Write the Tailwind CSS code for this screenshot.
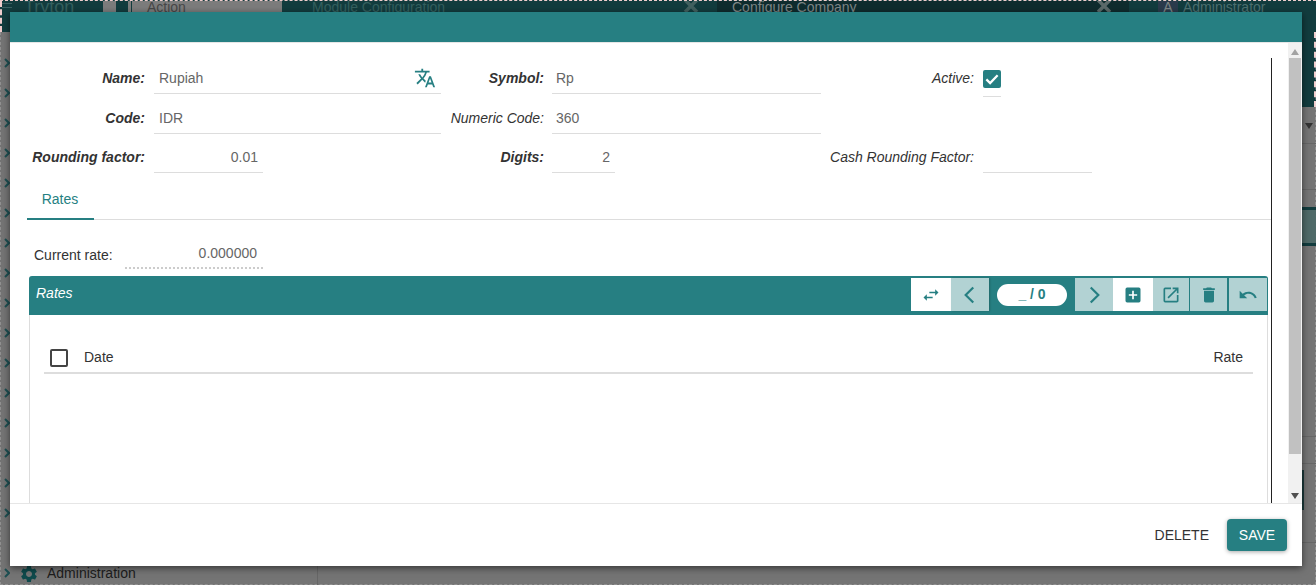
<!DOCTYPE html>
<html lang="en">
  <head>
    <meta charset="UTF-8" />
    <title>Configure Company</title>
    <script src="https://cdn.jsdelivr.net/npm/@tailwindcss/browser@4"></script>
  </head>
  <body class="relative w-[1316px] h-[585px] overflow-hidden bg-[#747474] font-['Liberation_Sans',Arial,sans-serif] text-[14px] text-[#333]">
    <!-- dimmed page behind the dialog -->
    <div class="flex h-[32px] items-start overflow-hidden border-t border-dashed border-[#f0cdcd] bg-[#123c3e] leading-[13px] text-[#34605f]">
      <div class="ml-[2px] mt-[2px] flex w-[10px] flex-col gap-[3px]">
        <span class="h-[1px] bg-[#3a6062]"></span>
        <span class="h-[1px] bg-[#3a6062]"></span>
      </div>
      <span class="ml-[12px] w-[79px] text-[18px]">Tryton</span>
      <div class="flex h-[32px] w-[179px] items-start bg-[#7c7c7c] pl-[13px] text-[#474747]">
        <span class="h-[12px] w-[12px] bg-[#123c3e]"></span>
        <span class="ml-[3px] mr-[15px] h-[12px] w-[1px] bg-[#123c3e]"></span>
        <span>Action</span>
      </div>
      <span class="ml-[30px] w-[371px]">Module Configuration</span>
      <svg class="mt-[-1px] h-[13px] w-[34px] text-[#41605f]" viewBox="0 0 34 13" fill="none" stroke="currentColor" stroke-width="3.500"><path d="M2 0l12 12M14 0L2 12"/></svg>
      <div class="flex h-[32px] w-[412px] items-start justify-between bg-[#0f2c2e] pl-[15px] pr-[18px] text-[#7d8686]">
        <span>Configure Company</span>
        <svg class="mt-[-1px] h-[13px] w-[14px] text-[#5b6a6a]" viewBox="0 0 14 13" fill="none" stroke="currentColor" stroke-width="3.500"><path d="M1 0l12 12M13 0L1 12"/></svg>
      </div>
      <span class="ml-[29px] flex h-[12px] w-[20px] justify-center bg-[#2b3b4c] text-[#7d8686]">A</span>
      <span class="ml-[5px] text-[#4d7070]">Administrator</span>
    </div>
    <div class="absolute right-0 top-[32px] h-[75px] w-[14px] border-r-2 border-dashed border-[#f0cdcd] bg-[#123c3e]"></div>
    <div class="absolute left-0 top-[1px] h-[31px] w-[2px] border-l-2 border-dashed border-[#f0cdcd]"></div>
    <div class="absolute inset-x-0 bottom-0 top-[32px] border-x border-b border-dashed border-white/20"></div>

    <!-- bits of the page on the right of the dialog -->
    <svg class="absolute left-[1305px] top-[123px] h-[6px] w-[8px] fill-[#333]" viewBox="0 0 8 6"><path d="M0 0h8L4 6z"/></svg>
    <div class="absolute left-[1302px] right-0 top-[143px] h-[1px] bg-[#666]"></div>
    <div class="absolute left-[1302px] right-0 top-[189px] h-[1px] bg-[#666]"></div>
    <div class="absolute left-[1302px] right-0 top-[207px] h-[39px] border-y-[3px] border-[#123c3e] bg-[#4f6a68]"></div>
    <div class="absolute left-[1302px] right-0 top-[436px] h-[1px] bg-[#666]"></div>
    <div class="absolute left-[1302px] right-0 top-[463px] h-[1px] bg-[#666]"></div>
    <div class="absolute left-[1302px] top-[470px] h-[40px] w-[2px] bg-[#1c3b3c]"></div>
    <div class="absolute left-[1302px] right-0 top-[542px] h-[1px] bg-[#666]"></div>

    <!-- tree chevrons left of the dialog -->
    <div id="tree" class="absolute left-[4px] top-[48px] flex flex-col"></div>
    <svg class="absolute left-[4px] top-[568px] h-[10px] w-[6px] text-[#1d4f52]" viewBox="0 0 6 10" fill="none" stroke="currentColor" stroke-width="2"><path d="M1 1l4 4-4 4"/></svg>
    <div class="absolute left-[19px] top-[563px] flex items-center gap-[8px] text-[#1c1c1c]">
      <svg class="size-[20px] text-[#0f4a4c]" viewBox="0 0 24 24" fill="currentColor"><path d="M19.140 12.940c.04-.3.06-.61.06-.94 0-.32-.02-.64-.07-.94l2.030-1.580c.18-.14.23-.41.12-.61l-1.920-3.320c-.12-.22-.37-.29-.59-.22l-2.390.96c-.5-.38-1.030-.7-1.620-.94L14.400 2.810c-.04-.24-.24-.41-.48-.41h-3.840c-.24 0-.43.17-.47.41L9.250 5.350c-.59.24-1.130.57-1.620.94l-2.390-.96c-.22-.08-.47 0-.59.22L2.740 8.870c-.12.21-.08.47.12.61l2.030 1.580c-.05.3-.09.63-.09.94s.02.64.07.94l-2.030 1.580c-.18.14-.23.41-.12.61l1.920 3.320c.12.22.37.29.59.22l2.390-.96c.5.38 1.030.7 1.620.94l.36 2.540c.05.24.24.41.48.41h3.840c.24 0 .44-.17.47-.41l.36-2.540c.59-.24 1.130-.56 1.620-.94l2.390.96c.22.08.47 0 .59-.22l1.920-3.320c.12-.22.07-.47-.12-.61l-2.010-1.580zM12 15.600c-1.980 0-3.600-1.620-3.600-3.600s1.620-3.600 3.600-3.600 3.600 1.620 3.600 3.600-1.620 3.600-3.600 3.600z"/></svg>
      <span>Administration</span>
    </div>
    <div class="absolute left-[317px] top-[566px] bottom-0 w-[1px] bg-[#666]"></div>

    <!-- dialog -->
    <div class="absolute left-[10px] top-[12px] flex h-[554px] w-[1292px] flex-col bg-white shadow-[0_2px_7px_rgba(0,0,0,0.55)]">
      <div class="h-[30px] shrink-0 bg-[#267f82]"></div>
      <div class="relative flex min-h-0 flex-1 border-t border-[#e6e6e6]">
        <div class="min-w-0 flex-1 overflow-hidden pl-[17px] pr-[17px]">
          <div class="grid grid-cols-[127px_287px_111px_269px_162px_auto] items-start pt-[16px]">
            <label class="h-[40px] pt-[9px] pr-[9px] text-right font-bold italic">Name:</label>
            <div class="flex h-[35px] items-start justify-between border-b border-[#ddd] pl-[5px] pr-[5px] pt-[9px] text-[#666]">
              <span>Rupiah</span>
              <svg class="-mt-[1px] size-[22px] text-[#267f82]" viewBox="0 0 24 24" fill="currentColor"><path d="M12.870 15.070l-2.540-2.510.03-.03A17.520 17.520 0 0 0 14.070 6H17V4h-7V2H8v2H1v1.990h11.170C11.500 7.920 10.440 9.750 9 11.350 8.070 10.320 7.300 9.190 6.690 8h-2c.73 1.630 1.730 3.170 2.980 4.560l-5.090 5.020L4 19l5-5 3.110 3.110.76-2.040zM18.500 10h-2L12 22h2l1.120-3h4.750L21 22h2l-4.500-12zm-2.620 7l1.620-4.330L19.120 17h-3.240z"/></svg>
            </div>
            <label class="h-[40px] pt-[9px] pr-[8px] text-right font-bold italic">Symbol:</label>
            <div class="h-[35px] border-b border-[#ddd] pl-[4px] pt-[9px] text-[#666]">Rp</div>
            <label class="h-[40px] pt-[9px] pr-[9px] text-right italic">Active:</label>
            <div class="h-[35px] w-[18px] pt-[11px]">
              <div class="flex size-[18px] items-center justify-center rounded-[2px] bg-[#267f82]">
                <svg class="size-[18px] text-white" viewBox="0 0 24 24" fill="none" stroke="currentColor" stroke-width="3"><path d="M4.500 12.500l5 5L19.500 7"/></svg>
              </div>
              <div class="mt-[8px] h-[1px] w-[18px] bg-[#ddd]"></div>
            </div>

            <label class="h-[40px] pt-[9px] pr-[9px] text-right font-bold italic">Code:</label>
            <div class="h-[35px] border-b border-[#ddd] pl-[5px] pt-[9px] text-[#666]">IDR</div>
            <label class="h-[40px] pt-[9px] pr-[8px] text-right italic">Numeric Code:</label>
            <div class="h-[35px] border-b border-[#ddd] pl-[4px] pt-[9px] text-[#666]">360</div>
            <div></div>
            <div></div>

            <label class="h-[39px] whitespace-nowrap pt-[8px] pr-[9px] text-right font-bold italic">Rounding factor:</label>
            <div class="h-[34px] w-[109px] border-b border-[#ddd] pr-[5px] pt-[8px] text-right text-[#666]">0.01</div>
            <label class="h-[39px] pt-[8px] pr-[8px] text-right font-bold italic">Digits:</label>
            <div class="h-[34px] w-[63px] border-b border-[#ddd] pr-[5px] pt-[8px] text-right text-[#666]">2</div>
            <label class="h-[39px] whitespace-nowrap pt-[8px] pr-[9px] text-right italic">Cash Rounding Factor:</label>
            <div class="h-[34px] w-[109px] border-b border-[#ddd]"></div>
          </div>

          <div class="h-[42px] border-b border-[#ddd]">
            <div class="h-[42px] w-[67px] border-b-2 border-[#267f82] pr-[1px] pt-[11px] text-center text-[#267f82]">Rates</div>
          </div>

          <div class="mt-[23px] flex items-start pl-[7px]">
            <span class="w-[91px] pt-[2px]">Current rate:</span>
            <div class="h-[26px] w-[138px] border-b-2 border-dotted border-[#ccc] pr-[6px] text-right text-[#666]">0.000000</div>
          </div>

          <div class="ml-[2px] mt-[7px] h-[300px] w-[1239px] rounded-t-[3px] border-x border-[#ddd]">
            <div class="-mx-[1px] flex h-[39px] items-start justify-between rounded-t-[3px] bg-[#267f82] pr-[1px] pt-[2px]">
              <span class="pl-[7px] pt-[5px] italic text-white">Rates</span>
              <div class="flex h-[33px] items-stretch">
                <div class="flex w-[40px] items-center justify-center bg-white">
                  <svg class="size-[20px] text-[#267f82]" viewBox="0 0 24 24" fill="currentColor"><path d="M6.990 11L3 15l3.990 4v-3H14v-2H6.990v-3zM21 9l-3.990-4v3H10v2h7.010v3L21 9z"/></svg>
                </div>
                <div class="flex w-[38px] items-center justify-center bg-[#b2d2d3] shadow-[1px_0_2px_rgba(0,0,0,0.2)]">
                  <svg class="size-[26px] text-[#267f82]" viewBox="0 0 24 24" fill="none" stroke="currentColor" stroke-width="2"><path d="M15 5l-7 7 7 7"/></svg>
                </div>
                <div class="flex w-[86px] items-center justify-center">
                  <div class="flex h-[22px] w-[70px] items-center justify-center rounded-full bg-white font-bold text-[#267f82]">_ / 0</div>
                </div>
                <div class="flex w-[38px] items-center justify-center bg-[#b2d2d3]">
                  <svg class="size-[26px] text-[#267f82]" viewBox="0 0 24 24" fill="none" stroke="currentColor" stroke-width="2"><path d="M9 5l7 7-7 7"/></svg>
                </div>
                <div class="flex w-[40px] items-center justify-center bg-white">
                  <svg class="size-[20px] text-[#267f82]" viewBox="0 0 24 24" fill="currentColor"><path d="M19 3H5a2 2 0 0 0-2 2v14a2 2 0 0 0 2 2h14a2 2 0 0 0 2-2V5a2 2 0 0 0-2-2zm-2 10h-4v4h-2v-4H7v-2h4V7h2v4h4v2z"/></svg>
                </div>
                <div class="flex w-[36px] items-center justify-center bg-[#b2d2d3]">
                  <svg class="size-[20px] text-[#267f82]" viewBox="0 0 24 24" fill="currentColor"><path d="M19 19H5V5h7V3H5a2 2 0 0 0-2 2v14a2 2 0 0 0 2 2h14c1.100 0 2-.9 2-2v-7h-2v7zM14 3v2h3.590l-9.830 9.830 1.410 1.410L19 6.410V10h2V3h-7z"/></svg>
                </div>
                <div class="ml-[1px] flex w-[37px] items-center justify-center bg-[#b2d2d3]">
                  <svg class="size-[20px] text-[#267f82]" viewBox="0 0 24 24" fill="currentColor"><path d="M6 19c0 1.100.9 2 2 2h8c1.100 0 2-.9 2-2V7H6v12zM19 4h-3.500l-1-1h-5l-1 1H5v2h14V4z"/></svg>
                </div>
                <div class="ml-[2px] flex w-[38px] items-center justify-center bg-[#b2d2d3]">
                  <svg class="size-[20px] text-[#267f82]" viewBox="0 0 24 24" fill="currentColor"><path d="M12.500 8c-2.650 0-5.050.99-6.900 2.600L2 7v9h9l-3.620-3.620c1.390-1.160 3.160-1.880 5.120-1.880 3.540 0 6.550 2.310 7.600 5.500l2.370-.78C21.080 11.030 17.150 8 12.500 8z"/></svg>
                </div>
              </div>
            </div>
            <div class="mx-[14px] mt-[32px] flex h-[27px] items-start justify-between border-b-2 border-[#ddd] pl-[6px] pr-[10px]">
              <div class="flex items-start gap-[16px]">
                <span class="mt-[2px] block size-[18px] rounded-[2px] border-2 border-[#444]"></span>
                <span>Date</span>
              </div>
              <span>Rate</span>
            </div>
          </div>
        </div>
        <!-- black rule left of the scrollbar -->
        <div class="absolute left-[1261px] top-[15px] bottom-0 w-[1px] bg-[#222]"></div>
        <div class="flex w-[14px] shrink-0 flex-col items-center bg-[#f1f1f1]">
          <svg class="mt-[6px] h-[6px] w-[8px] fill-[#a3a3a3]" viewBox="0 0 8 6"><path d="M4 0l4 6H0z"/></svg>
          <div class="mt-[3px] h-[396px] w-[12px] bg-[#c1c1c1]"></div>
          <svg class="mt-auto mb-[4px] h-[6px] w-[8px] fill-[#505050]" viewBox="0 0 8 6"><path d="M0 0h8L4 6z"/></svg>
        </div>
      </div>
      <div class="flex h-[63px] shrink-0 items-start justify-end border-t border-[#e6e6e6] pr-[15px] pt-[15px]">
        <button class="mr-[18px] h-[32px] text-[#333]">DELETE</button>
        <button class="h-[32px] w-[60px] rounded-[4px] bg-[#267f82] text-white shadow-[0_1px_4px_rgba(0,0,0,0.35)]">SAVE</button>
      </div>
    </div>

    <script>
      const tree = document.getElementById("tree");
      for (let i = 0; i < 16; i++) {
        tree.innerHTML +=
          '<div class="flex h-[30px] items-center"><svg class="h-[10px] w-[6px] text-[#1d4f52]" viewBox="0 0 6 10" fill="none" stroke="currentColor" stroke-width="2"><path d="M1 1l4 4-4 4"/></svg></div>';
      }
    </script>
  </body>
</html>
